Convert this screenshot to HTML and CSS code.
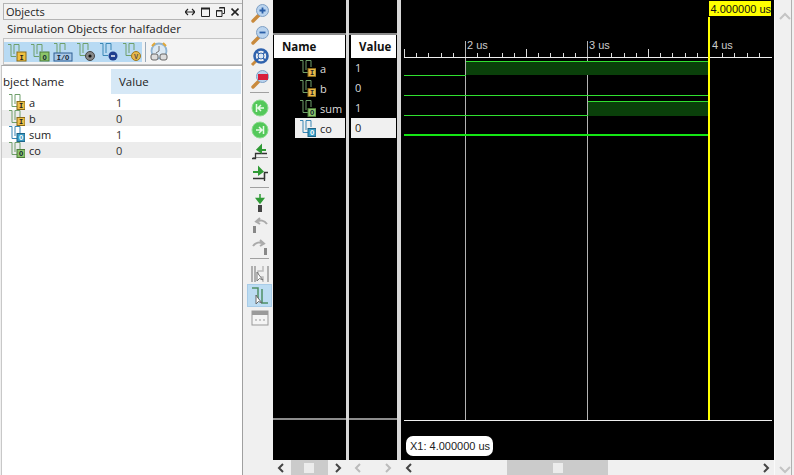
FILE: index.html
```html
<!DOCTYPE html>
<html lang="en">
<head>
    <meta charset="UTF-8">
    <title>Objects - halfadder</title>
    <link rel="stylesheet" href="styles.css">
</head>
<body>
<svg class="defs" xmlns="http://www.w3.org/2000/svg">
    <symbol id="wave-green" viewBox="0 0 18 18">
        <path d="M2 1.5H5V13.5H10M8 1.5V11M8 1.5H13V8" fill="none" stroke="#6f9f6a"/>
    </symbol>
    <symbol id="wave-blue" viewBox="0 0 18 18">
        <path d="M2 1.5H5V13.5H10M8 1.5V11M8 1.5H13V8" fill="none" stroke="#3a87b5"/>
    </symbol>
    <symbol id="chev-left" viewBox="0 0 10 10"><path d="M7 1L3 5L7 9" fill="none" stroke="currentColor" stroke-width="2"/></symbol>
    <symbol id="chev-right" viewBox="0 0 10 10"><path d="M3 1L7 5L3 9" fill="none" stroke="currentColor" stroke-width="2"/></symbol>
    <symbol id="chev-up" viewBox="0 0 12 10"><path d="M1 7L6 2L11 7" fill="none" stroke="currentColor" stroke-width="2"/></symbol>
    <symbol id="chev-down" viewBox="0 0 12 10"><path d="M1 3L6 8L11 3" fill="none" stroke="currentColor" stroke-width="2"/></symbol>
    <symbol id="lens" viewBox="0 0 20 20">
        <path d="M3 18L9 12" stroke="#c98a3c" stroke-width="3.4" stroke-linecap="round"/>
        <circle cx="12.5" cy="7.5" r="6" fill="#b9d3ee" stroke="#7e9fc4"/>
    </symbol>
</svg>

<div class="app">
    <section class="objects">
        <header class="objects-title">
            <span>Objects</span>
            <span class="win-btns">
                <svg width="10" height="10" viewBox="0 0 10 10"><path d="M0 5H10M3 2L0 5L3 8M7 2L10 5L7 8" fill="none" stroke="#222" stroke-width="1.2"/></svg>
                <svg width="9" height="10" viewBox="0 0 9 10"><path d="M.5 1.5H8.5V9.5H.5Z" fill="none" stroke="#222"/><path d="M0 1.5H9" stroke="#222" stroke-width="2"/></svg>
                <svg width="9" height="10" viewBox="0 0 9 10"><path d="M3.5 .5H8.5V6.5H6.5M.5 3.5H6V9.5H.5Z" fill="none" stroke="#222"/><path d="M3 1H9M0 4H6" stroke="#222"/></svg>
                <svg width="8" height="10" viewBox="0 0 8 10"><path d="M.5 1.5L7.5 8.5M7.5 1.5L.5 8.5" stroke="#222" stroke-width="1.7"/></svg>
            </span>
        </header>
        <div class="objects-sub">Simulation Objects for halfadder</div>
        <div class="objects-tools">
            <span class="tool-on"><svg width="22" height="20" viewBox="0 0 22 20"><use href="#wave-green" x="1" y="1" width="18" height="18"/><rect x="12" y="10" width="9" height="9" fill="#f0c040" stroke="#8a6a18"/><text class="tiny" x="16.5" y="17.5" fill="#222">I</text></svg></span>
            <span class="tool-on"><svg width="22" height="20" viewBox="0 0 22 20"><use href="#wave-green" x="1" y="1" width="18" height="18"/><rect x="12" y="10" width="9" height="9" fill="#8cc46a" stroke="#4c7c38"/><text class="tiny" x="16.5" y="17.5" fill="#123">O</text></svg></span>
            <span class="tool-on"><svg width="22" height="20" viewBox="0 0 22 20"><use href="#wave-green" x="1" y="0" width="18" height="18"/><rect x="3" y="11" width="18" height="8" fill="#a9c8e6" stroke="#2f5f94"/><text class="tiny" x="12" y="17.5" fill="#123">I/O</text></svg></span>
            <span class="tool-on"><svg width="22" height="20" viewBox="0 0 22 20"><use href="#wave-green" x="1" y="0" width="18" height="18"/><circle cx="16" cy="14" r="4.5" fill="#888" stroke="#444"/><circle cx="16" cy="14" r="1.6" fill="#111"/></svg></span>
            <span class="tool-on"><svg width="22" height="20" viewBox="0 0 22 20"><use href="#wave-blue" x="1" y="0" width="18" height="18"/><circle cx="16" cy="14" r="4.5" fill="#1f3f8f"/><path d="M14 14H18" stroke="#fff" stroke-width="1.4"/></svg></span>
            <span class="tool-on"><svg width="22" height="20" viewBox="0 0 22 20"><use href="#wave-green" x="1" y="0" width="18" height="18"/><circle cx="16" cy="14" r="4.5" fill="#e8b84a" stroke="#a07820"/><text class="tiny" x="16" y="16.5" fill="#654">V</text></svg></span>
            <i class="tool-sep"></i>
            <svg class="clock" width="22" height="22" viewBox="0 0 22 22">
                <circle cx="11" cy="10" r="7.5" fill="#dbe9f4" stroke="#8fb4d2" stroke-width="1.8"/>
                <path d="M4 5L7 2M18 5L15 2" stroke="#e0a83a" stroke-width="2"/>
                <path d="M11 5V10L8 12" fill="none" stroke="#777"/>
                <rect x="3" y="13" width="7" height="6" rx="2" fill="#ddd" stroke="#666"/>
                <rect x="12" y="13" width="7" height="6" rx="2" fill="#ddd" stroke="#666"/>
            </svg>
        </div>
        <div class="objects-table">
            <div class="table-head">
                <span class="th-name">bject Name</span>
                <span class="th-value">Value</span>
            </div>
            <div class="obj-row">
                <svg width="18" height="16" viewBox="0 0 18 16"><use href="#wave-green" x="0" y="-1" width="18" height="18"/><rect x="10" y="7.5" width="8" height="8" fill="#edc04a" stroke="#8a6a18"/><text class="tiny" x="14" y="14" fill="#222">I</text></svg>
                <span class="obj-name">a</span><span class="obj-val">1</span>
            </div>
            <div class="obj-row">
                <svg width="18" height="16" viewBox="0 0 18 16"><use href="#wave-green" x="0" y="-1" width="18" height="18"/><rect x="10" y="7.5" width="8" height="8" fill="#edc04a" stroke="#8a6a18"/><text class="tiny" x="14" y="14" fill="#222">I</text></svg>
                <span class="obj-name">b</span><span class="obj-val">0</span>
            </div>
            <div class="obj-row">
                <svg width="18" height="16" viewBox="0 0 18 16"><use href="#wave-blue" x="0" y="-1" width="18" height="18"/><rect x="10" y="7.5" width="8" height="8" fill="#3a9cc4" stroke="#1d6488"/><text class="tiny" x="14" y="14" fill="#fff">O</text></svg>
                <span class="obj-name">sum</span><span class="obj-val">1</span>
            </div>
            <div class="obj-row">
                <svg width="18" height="16" viewBox="0 0 18 16"><use href="#wave-green" x="0" y="-1" width="18" height="18"/><rect x="10" y="7.5" width="8" height="8" fill="#8cc46a" stroke="#4c7c38"/><text class="tiny" x="14" y="14" fill="#123">O</text></svg>
                <span class="obj-name">co</span><span class="obj-val">0</span>
            </div>
        </div>
    </section>

    <nav class="side-tools">
        <span class="side-btn"><svg width="20" height="20"><use href="#lens" width="20" height="20"/><path d="M9.5 7.5H15.5M12.5 4.5V10.5" stroke="#2a5fa8" stroke-width="1.8"/></svg></span>
        <span class="side-btn"><svg width="20" height="20"><use href="#lens" width="20" height="20"/><path d="M9.5 7.5H15.5" stroke="#2a5fa8" stroke-width="1.8"/></svg></span>
        <span class="side-btn"><svg width="20" height="20" viewBox="0 0 20 20"><path d="M2 18L6 14" stroke="#c98a3c" stroke-width="3"/><circle cx="11" cy="9" r="6.5" fill="none" stroke="#2f62ad" stroke-width="2.6"/><path d="M6.5 4.5L15.5 13.5M15.5 4.5L6.5 13.5" stroke="#2f62ad" stroke-width="1.6"/><circle cx="11" cy="9" r="3" fill="#dbe8f6" stroke="#2f62ad"/></svg></span>
        <span class="side-btn"><svg width="20" height="20"><use href="#lens" width="20" height="20"/><rect x="8" y="5" width="10" height="6" fill="#d81e3c"/></svg></span>
        <i class="side-sep"></i>
        <span class="side-btn"><svg width="18" height="18" viewBox="0 0 18 18"><circle cx="9" cy="9" r="8" fill="#54c85a" stroke="#8edc90"/><path d="M5.5 5V13M13 9H7M10 6L7 9L10 12" fill="none" stroke="#e8fbe8" stroke-width="1.5"/></svg></span>
        <span class="side-btn"><svg width="18" height="18" viewBox="0 0 18 18"><circle cx="9" cy="9" r="8" fill="#54c85a" stroke="#8edc90"/><path d="M12.5 5V13M5 9H11M8 6L11 9L8 12" fill="none" stroke="#e8fbe8" stroke-width="1.5"/></svg></span>
        <span class="side-btn"><svg width="20" height="18" viewBox="0 0 20 18"><path d="M2 15.5H5.5V10.5H17" fill="none" stroke="#333" stroke-width="1.3"/><path d="M3 14.5H18" stroke="#333" stroke-width="1" opacity=".5"/><path d="M8 7H16M11 3L7.5 6.5L11 9Z" fill="#2f9a35" stroke="#2f9a35" stroke-width="2"/></svg></span>
        <span class="side-btn"><svg width="20" height="18" viewBox="0 0 20 18"><path d="M18 7.5H14.5V13.5H3" fill="none" stroke="#333" stroke-width="1.3"/><path d="M14.5 8V16" stroke="#333" stroke-width="1.3"/><path d="M3 7H12M9 3L12.5 6.5L9 9Z" fill="#2f9a35" stroke="#2f9a35" stroke-width="2"/></svg></span>
        <i class="side-sep"></i>
        <span class="side-btn"><svg width="18" height="20" viewBox="0 0 18 20"><path d="M9 1V6M5.5 5.5H12.5L9 10Z" fill="#2f9a35" stroke="#2f9a35" stroke-width="1.5"/><rect x="7" y="12" width="4" height="7" fill="#444"/></svg></span>
        <span class="side-btn"><svg width="20" height="20" viewBox="0 0 20 20"><path d="M17 9C14 5 10 5 8 6M10 3L6 6.5L10 9" fill="none" stroke="#aaa" stroke-width="2"/><rect x="3" y="11" width="3" height="7" fill="#888"/></svg></span>
        <span class="side-btn"><svg width="20" height="20" viewBox="0 0 20 20"><path d="M3 9C6 5 10 5 12 6M10 3L14 6.5L10 9" fill="none" stroke="#aaa" stroke-width="2"/><rect x="14" y="11" width="3" height="7" fill="#888"/></svg></span>
        <i class="side-sep"></i>
        <span class="side-btn"><svg width="20" height="20" viewBox="0 0 20 20"><path d="M2 2V18M18 2V18M5 2V18" stroke="#999" stroke-width="1.5"/><path d="M13 2V7H8V13H13V18" fill="none" stroke="#bbb" stroke-width="1.5"/><path d="M7 8V17L9.5 14.5L13 16L9 11Z" fill="#fff" stroke="#777"/></svg></span>
        <span class="side-btn side-on"><svg width="20" height="20" viewBox="0 0 20 20"><path d="M2 2H8V16M12 3V17H18" fill="none" stroke="#4f8f66" stroke-width="1.5"/><path d="M6 9V18L8.5 15.5L12 17L8 12Z" fill="#fff" stroke="#666"/></svg></span>
        <span class="side-btn"><svg width="20" height="18" viewBox="0 0 20 18"><rect x="2" y="2" width="16" height="14" fill="#f4f4f4" stroke="#999"/><rect x="2" y="2" width="16" height="4" fill="#9a9a9a"/><path d="M5 11H7M9 11H11M13 11H15" stroke="#999"/></svg></span>
    </nav>

    <div class="pane pane-names">
        <div class="pane-top"></div>
        <div class="pane-head">Name</div>
        <div class="pane-rows">
            <div class="sig-row">
                <svg width="18" height="18" viewBox="0 0 18 18"><use href="#wave-green" width="18" height="18"/><rect x="10" y="9.5" width="8" height="8" fill="#e8b84a" stroke="#8a6a18"/><text class="tiny" x="14" y="16" fill="#222">I</text></svg>
                <span>a</span>
            </div>
            <div class="sig-row">
                <svg width="18" height="18" viewBox="0 0 18 18"><use href="#wave-green" width="18" height="18"/><rect x="10" y="9.5" width="8" height="8" fill="#e8b84a" stroke="#8a6a18"/><text class="tiny" x="14" y="16" fill="#222">I</text></svg>
                <span>b</span>
            </div>
            <div class="sig-row">
                <svg width="18" height="18" viewBox="0 0 18 18"><use href="#wave-green" width="18" height="18"/><rect x="10" y="9.5" width="8" height="8" fill="#8cc46a" stroke="#4c7c38"/><text class="tiny" x="14" y="16" fill="#123">O</text></svg>
                <span>sum</span>
            </div>
            <div class="sig-row sig-sel">
                <svg width="18" height="18" viewBox="0 0 18 18"><use href="#wave-blue" width="18" height="18"/><rect x="10" y="9.5" width="8" height="8" fill="#3a9cc4" stroke="#1d6488"/><text class="tiny" x="14" y="16" fill="#fff">O</text></svg>
                <span>co</span>
            </div>
        </div>
        <div class="pane-foot"></div>
        <div class="hscroll">
            <svg class="chev" width="10" height="10"><use href="#chev-left" width="10" height="10"/></svg>
            <span class="thumb thumb-name"><i></i></span>
            <svg class="chev" width="10" height="10"><use href="#chev-right" width="10" height="10"/></svg>
        </div>
    </div>
    <i class="pane-gap gap-names"></i>

    <div class="pane pane-values">
        <div class="pane-top"></div>
        <div class="pane-head">Value</div>
        <div class="pane-rows">
            <div class="val-row">1</div>
            <div class="val-row">0</div>
            <div class="val-row">1</div>
            <div class="val-row sig-sel">0</div>
        </div>
        <div class="pane-foot"></div>
        <div class="hscroll hscroll-off">
            <svg class="chev" width="10" height="10"><use href="#chev-left" width="10" height="10"/></svg>
            <svg class="chev" width="10" height="10"><use href="#chev-right" width="10" height="10"/></svg>
        </div>
    </div>
    <i class="pane-gap gap-values"></i>

    <div class="pane pane-wave">
        <div class="wave-canvas">
            <svg class="wave-svg" width="373" height="460" viewBox="0 0 373 460" shape-rendering="crispEdges">
                <!-- grid -->
                <path d="M64.5 41V420M186.5 41V420" stroke="#b4b4b4"/>
                <!-- ruler -->
                <path d="M3 57.5H371" stroke="#eee"/>
                <path d="M3.5 49V57M125.5 49V57M247.5 49V57M15.5 53V57M27.5 53V57M40.5 53V57M52.5 53V57M76.5 53V57M88.5 53V57M101.5 53V57M113.5 53V57M137.5 53V57M149.5 53V57M162.5 53V57M174.5 53V57M198.5 53V57M210.5 53V57M223.5 53V57M235.5 53V57M259.5 53V57M271.5 53V57M284.5 53V57M296.5 53V57M321.5 53V57M333.5 53V57M346.5 53V57M358.5 53V57" stroke="#ddd"/>
                <path d="M308.5 41V57" stroke="#b4b4b4"/>
                <text class="ruler-label" x="66" y="49">2 us</text>
                <text class="ruler-label" x="188" y="49">3 us</text>
                <text class="ruler-label" x="311" y="49">4 us</text>
                <!-- a -->
                <rect x="65" y="61" width="242" height="14" fill="#0a400a"/>
                <rect x="3" y="75" width="62" height="1" fill="#30e030"/>
                <rect x="65" y="61" width="242" height="1" fill="#30e030"/>
                <!-- b -->
                <rect x="3" y="95" width="304" height="1" fill="#30e030"/>
                <!-- sum -->
                <rect x="187" y="101" width="120" height="15" fill="#0a400a"/>
                <rect x="3" y="115" width="184" height="1" fill="#30e030"/>
                <rect x="187" y="101" width="120" height="1" fill="#30e030"/>
                <!-- co -->
                <rect x="3" y="134" width="304" height="2" fill="#14e614"/>
                <!-- cursor -->
                <rect x="307" y="17" width="2" height="403" fill="#ffff00"/>
                <rect x="308" y="1" width="62" height="15" fill="#ffff00"/>
                <text class="cursor-label" x="309.5" y="12.5">4.000000 us</text>
                <path d="M3 420.5H371" stroke="#eee"/>
            </svg>
            <div class="x1-label">X1: 4.000000 us</div>
        </div>
        <div class="hscroll hscroll-wave">
            <svg class="chev" width="10" height="10"><use href="#chev-left" width="10" height="10"/></svg>
            <span class="thumb thumb-wave"><i></i></span>
            <svg class="chev" width="10" height="10"><use href="#chev-right" width="10" height="10"/></svg>
        </div>
    </div>

    <aside class="vscroll">
        <svg width="12" height="10"><use href="#chev-up" width="12" height="10"/></svg>
        <svg width="12" height="10"><use href="#chev-down" width="12" height="10"/></svg>
    </aside>
</div>
</body>
</html>
```

FILE: styles.css
```css
* {
    margin: 0;
    padding: 0;
    box-sizing: border-box;
}

body {
    width: 794px;
    height: 475px;
    overflow: hidden;
    background-color: #f0f0f0;
    font-family: "Open Sans", "Liberation Sans", sans-serif;
    font-size: 11px;
    color: #222;
}

.defs {
    display: none;
}

.tiny {
    font-family: "Liberation Mono", monospace;
    font-size: 7px;
    font-weight: 700;
    text-anchor: middle;
}

.app {
    display: flex;
    height: 475px;
}

/* objects panel */
.objects {
    width: 243px;
    height: 475px;
    padding: 3px 0 0 1px;
    display: flex;
    flex-direction: column;
    border-right: 1px solid #a0a0a0;
}

.objects-title {
    height: 17px;
    margin-left: 2px;
    padding: 0 3px 0 2px;
    display: flex;
    align-items: center;
    justify-content: space-between;
    background-color: #f2f2f2;
    border: 1px solid #b4b4b4;
    border-right: none;
    font-size: 11px;
    line-height: 15px;
}

.win-btns {
    display: flex;
    align-items: center;
    gap: 6px;
}

.objects-sub {
    height: 18px;
    padding-left: 6px;
    line-height: 18px;
    font-size: 11.5px;
}

.objects-tools {
    height: 27px;
    margin-left: 2px;
    display: flex;
    align-items: center;
    border: 1px solid #c4c4c4;
    border-right: none;
    background-color: #f4f4f4;
}

.tool-on {
    width: 23px;
    height: 20px;
    display: flex;
    align-items: center;
    justify-content: center;
    background-color: #b8daf3;
}

.tool-sep {
    width: 1px;
    height: 20px;
    margin: 0 2px 0 3px;
    background-color: #9ab;
}

.objects-table {
    flex: 1;
    padding-top: 3px;
    background-color: #fff;
    border-top: 1px solid #a8a8a8;
    border-left: 1px solid #c8c8c8;
}

.table-head {
    height: 25px;
    display: flex;
    align-items: center;
    font-size: 11.5px;
}

.th-name {
    width: 109px;
    padding-left: 1px;
}

.th-value {
    flex: 1;
    height: 25px;
    margin-right: 1px;
    padding-left: 8px;
    line-height: 25px;
    background-color: #d6e8f6;
}

.obj-row {
    height: 16px;
    display: flex;
    align-items: center;
    padding-left: 5px;
    margin-right: 1px;
}

.obj-row:nth-child(2n+1) {
    background-color: #ececec;
}

.obj-name {
    width: 87px;
    margin-left: 4px;
}

.obj-val {
    color: #333;
}

/* middle toolbar */
.side-tools {
    width: 30px;
    padding: 2px 2px 0 5px;
    display: flex;
    flex-direction: column;
    gap: 1px;
}

.side-btn {
    height: 21px;
    flex: none;
    display: flex;
    align-items: center;
    justify-content: center;
}

.side-on {
    background-color: #bcdcf2;
    outline: 1px solid #a8cce8;
}

.side-sep {
    height: 1px;
    margin: 2px 2px 3px;
    background-color: #a0a0a0;
}

.side-sep:last-of-type {
    margin: 0 2px 3px;
}

/* name and value panes */
.pane {
    height: 475px;
    display: flex;
    flex-direction: column;
}

.pane-gap {
    height: 460px;
    background-color: #d8d8d8;
}

.gap-names {
    width: 3px;
}

.gap-values {
    width: 4px;
}

.pane-names {
    width: 73px;
}

.pane-values {
    width: 48px;
}

.pane-top {
    height: 35px;
    background-color: #000;
    border-bottom: 2px solid #8c8c8c;
}

.pane-head {
    height: 23px;
    padding-left: 8px;
    line-height: 23px;
    background-color: #fff;
    border-left: 1px solid #000;
    border-right: 1px solid #000;
    font-size: 11.5px;
    font-weight: 700;
    color: #111;
}

.pane-values .pane-head {
    padding-left: 8px;
    border-left-width: 2px;
}

.pane-rows {
    flex: 1;
    background-color: #000;
    color: #ddd;
}

.sig-row {
    height: 20px;
    display: flex;
    align-items: center;
    padding-left: 25px;
    gap: 4px;
}

.sig-row svg {
    flex: none;
}

.val-row {
    height: 20px;
    padding-left: 6px;
    line-height: 20px;
}

.sig-sel {
    color: #222;
    background-color: #f0f0f0;
}

.sig-row.sig-sel {
    margin-left: 22px;
    margin-right: 1px;
    padding-left: 3px;
}

.val-row.sig-sel {
    margin-left: 2px;
    margin-right: 1px;
    padding-left: 4px;
}

.pane-foot {
    height: 42px;
    background-color: #000;
    border-top: 2px solid #8c8c8c;
}

.hscroll {
    height: 15px;
    flex: none;
    display: flex;
    align-items: center;
    justify-content: space-between;
    padding: 0 3px;
    color: #444;
}

.hscroll-off {
    color: #bbb;
    padding: 0 4px;
}

.chev {
    flex: none;
}

.thumb {
    height: 15px;
    display: flex;
    align-items: center;
    justify-content: center;
    background-color: #cbcbcb;
}

.thumb i {
    width: 10px;
    height: 10px;
    background-color: #ececec;
}

.thumb-name {
    width: 37px;
    margin-left: -1px;
}

.thumb-wave {
    width: 101px;
    margin-left: 93px;
    margin-right: auto;
}

/* waveform */
.pane-wave {
    width: 373px;
}

.wave-canvas {
    height: 460px;
    position: relative;
    background-color: #000;
}

.wave-svg {
    display: block;
}

.ruler-label {
    font-family: "Liberation Sans", sans-serif;
    font-size: 11px;
    fill: #ccc;
}

.cursor-label {
    font-family: "Liberation Sans", sans-serif;
    font-size: 11px;
    fill: #111;
}

.x1-label {
    position: absolute;
    left: 5px;
    top: 436px;
    width: 87px;
    height: 20px;
    padding-left: 4px;
    line-height: 20px;
    border-radius: 7px;
    background-color: #fff;
    color: #222;
    font-family: "Liberation Sans", sans-serif;
    white-space: nowrap;
}

.vscroll {
    width: 20px;
    height: 475px;
    padding: 12px 0 1px;
    display: flex;
    flex-direction: column;
    align-items: center;
    justify-content: space-between;
    color: #c4c4c4;
    border-left: 1px solid #fafafa;
    box-shadow: inset -2px 0 0 #f0f0f0, inset -3px 0 0 #b0b0b0;
}
```
